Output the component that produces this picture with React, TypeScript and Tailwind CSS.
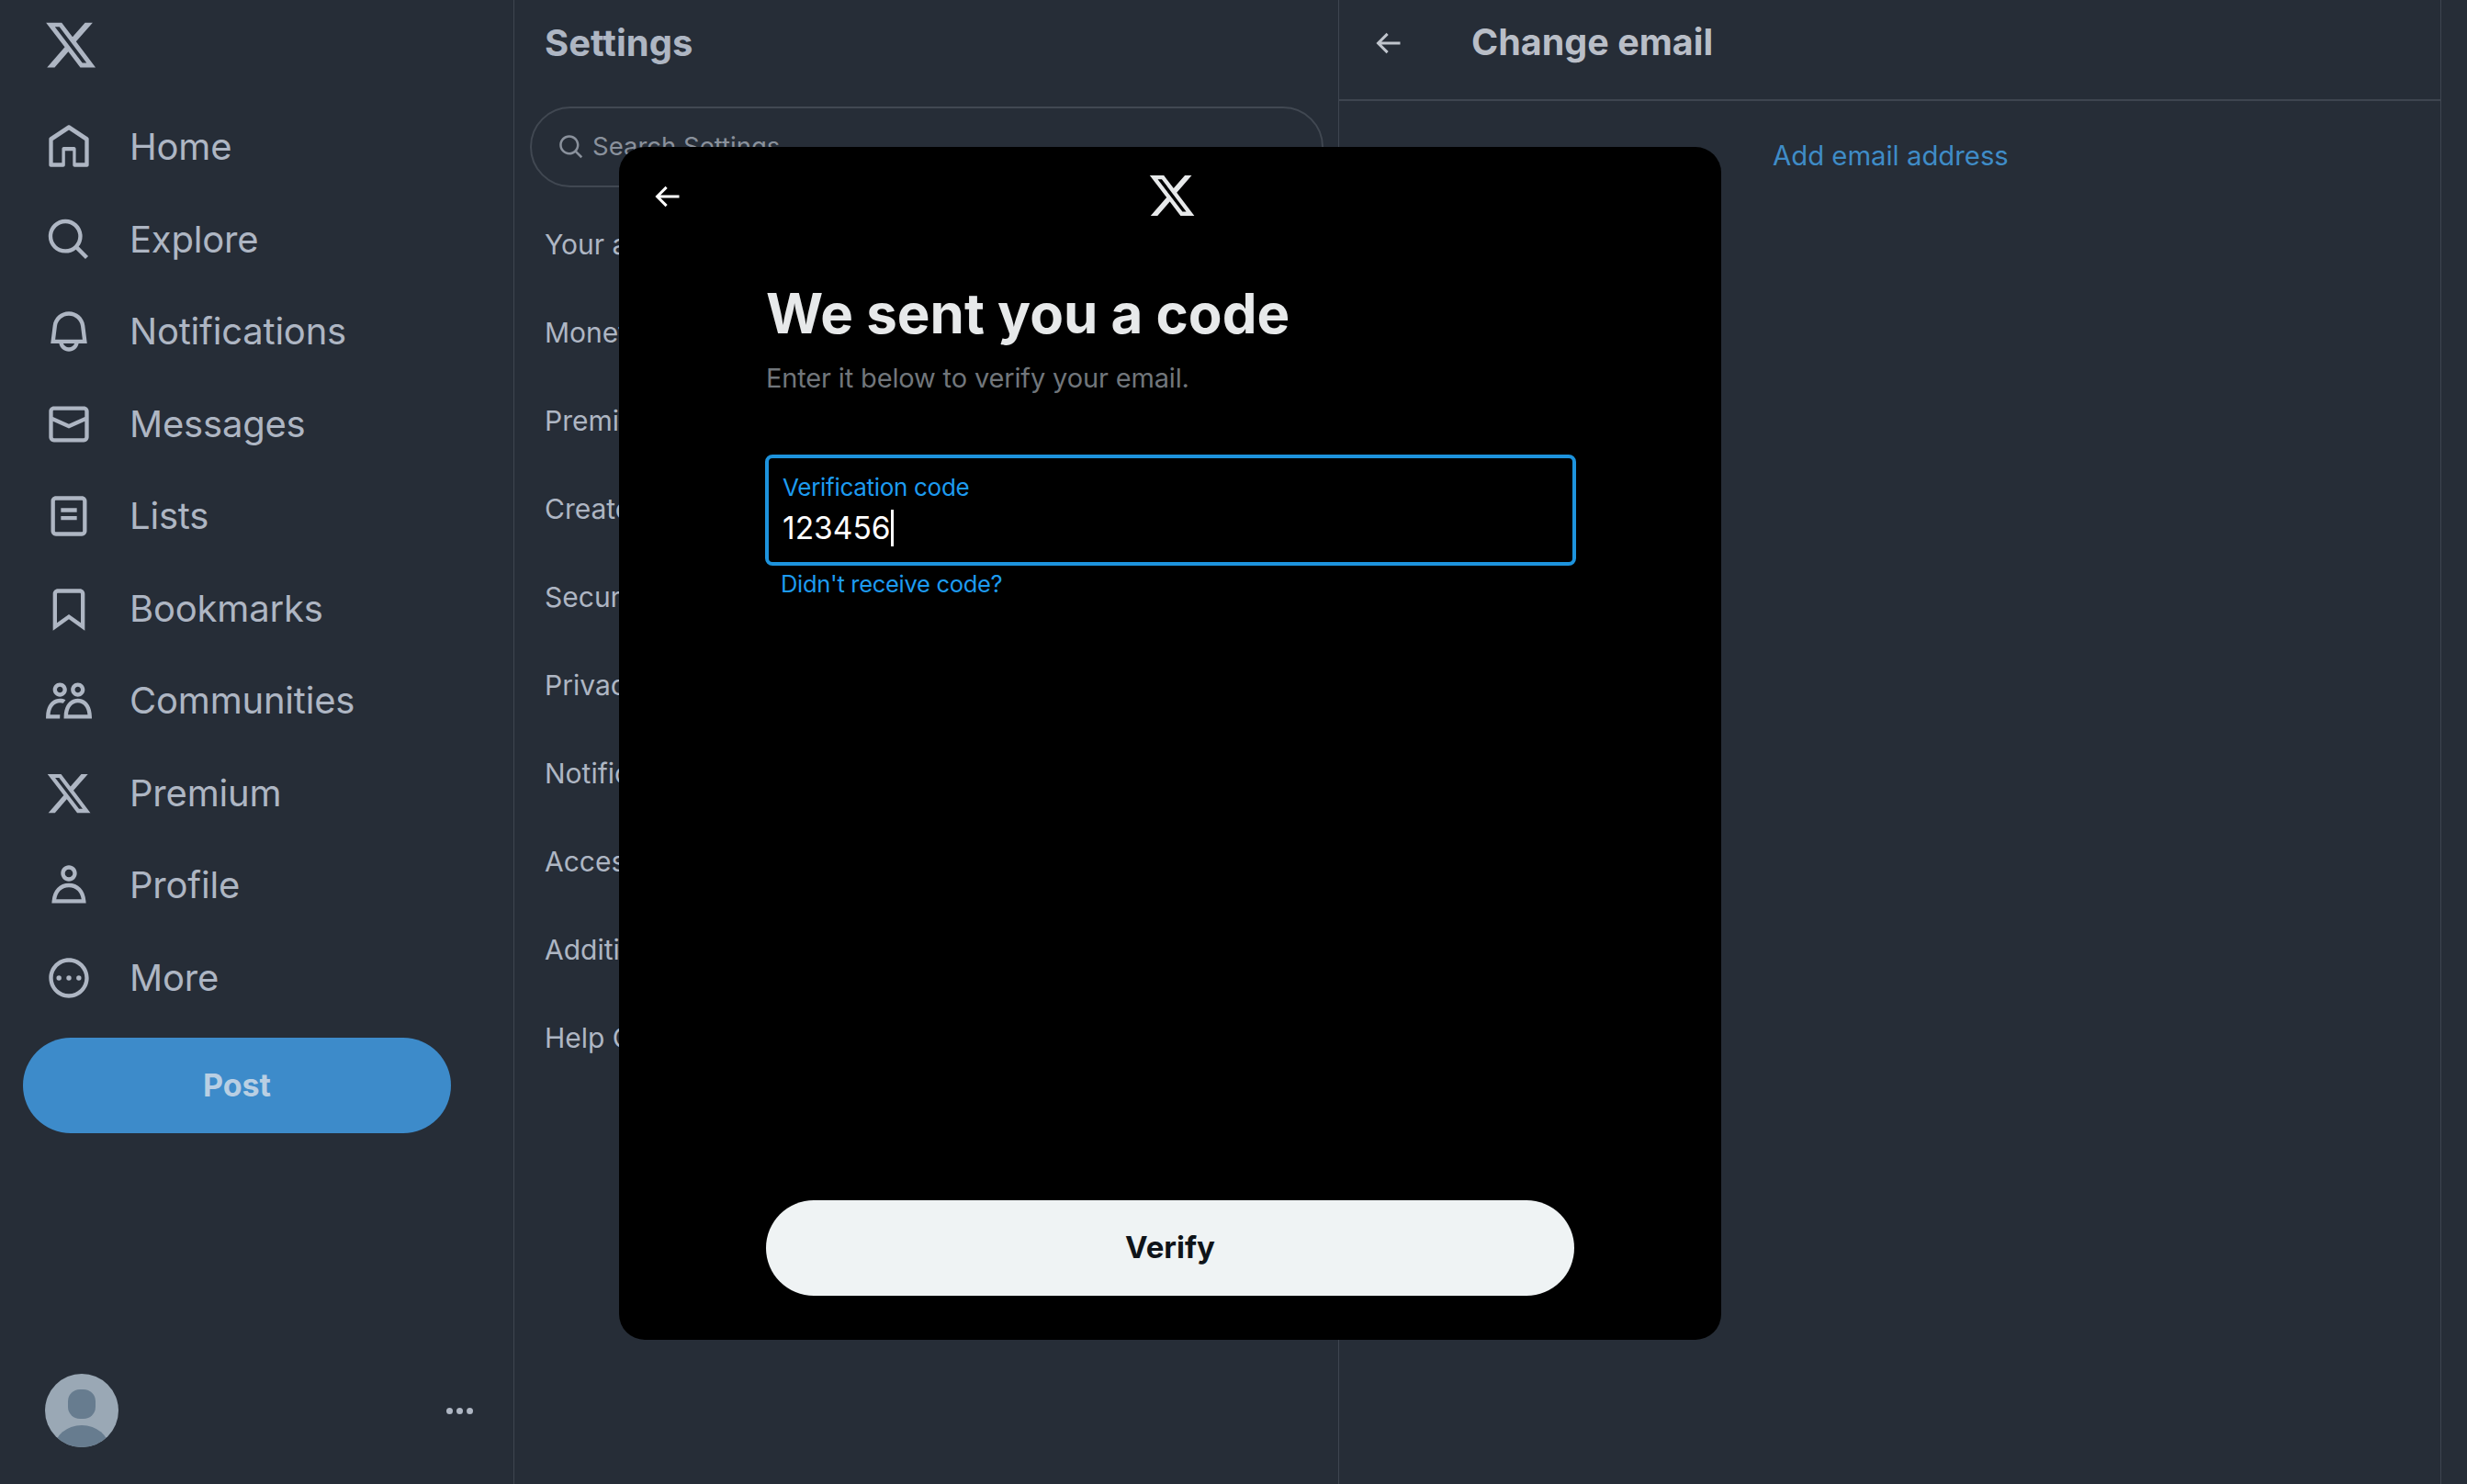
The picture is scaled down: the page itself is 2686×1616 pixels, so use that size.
const FONT = "font-['Inter','Noto_Sans',sans-serif]";

const X_PATH =
  "M18.244 2.25h3.308l-7.227 8.26 8.502 11.24H16.17l-5.214-6.817L4.99 21.75H1.68l7.73-8.835L1.254 2.25H8.08l4.713 6.231zm-1.161 17.52h1.833L7.084 4.126H5.117z";
const BACK_PATH = "M7.414 13l5.043 5.04-1.414 1.42L3.586 12l7.457-7.46 1.414 1.42L7.414 11H21v2H7.414z";

const navItems = [
  {
    label: "Home",
    d: "M21.591 7.146L12.52 1.157c-.316-.21-.724-.21-1.04 0l-9.071 5.99c-.26.173-.409.456-.409.757v13.183c0 .502.418.913.929.913H9.14c.51 0 .929-.41.929-.913v-7.075h3.909v7.075c0 .502.417.913.928.913h6.165c.511 0 .929-.41.929-.913V7.904c0-.301-.158-.584-.408-.758zM20 20l-4.5.01.011-7.097c0-.502-.418-.913-.928-.913H9.44c-.511 0-.929.41-.929.913L8.5 20H4V8.773l8.011-5.342L20 8.764z",
  },
  {
    label: "Explore",
    d: "M10.25 3.75c-3.59 0-6.5 2.91-6.5 6.5s2.91 6.5 6.5 6.5c1.795 0 3.419-.726 4.596-1.904 1.178-1.177 1.904-2.801 1.904-4.596 0-3.59-2.91-6.5-6.5-6.5zm-8.5 6.5c0-4.694 3.806-8.5 8.5-8.5s8.5 3.806 8.5 8.5c0 1.986-.682 3.815-1.824 5.262l4.781 4.781-1.414 1.414-4.781-4.781c-1.447 1.142-3.276 1.824-5.262 1.824-4.694 0-8.5-3.806-8.5-8.5z",
  },
  {
    label: "Notifications",
    d: "M19.993 9.042C19.48 5.017 16.054 2 11.996 2s-7.49 3.021-7.999 7.051L2.866 18H7.1c.463 2.282 2.481 4 4.9 4s4.437-1.718 4.9-4h4.236l-1.143-8.958zM12 20c-1.306 0-2.417-.835-2.829-2h5.658c-.412 1.165-1.523 2-2.829 2zm-6.866-4l.847-6.698C6.364 6.272 8.941 4 11.996 4s5.627 2.268 6.013 5.295L18.864 16H5.134z",
  },
  {
    label: "Messages",
    d: "M1.998 5.5c0-1.381 1.119-2.5 2.5-2.5h15c1.381 0 2.5 1.119 2.5 2.5v13c0 1.381-1.119 2.5-2.5 2.5h-15c-1.381 0-2.5-1.119-2.5-2.5v-13zm2.5-.5c-.276 0-.5.224-.5.5v2.764l8 3.638 8-3.636V5.5c0-.276-.224-.5-.5-.5h-15zm15.5 5.463l-8 3.636-8-3.638V18.5c0 .276.224.5.5.5h15c.276 0 .5-.224.5-.5v-8.037z",
  },
  {
    label: "Lists",
    d: "M3 4.5C3 3.12 4.12 2 5.5 2h13C19.88 2 21 3.12 21 4.5v15c0 1.38-1.12 2.5-2.5 2.5h-13C4.12 22 3 20.88 3 19.5v-15zM5.5 4c-.28 0-.5.22-.5.5v15c0 .28.22.5.5.5h13c.28 0 .5-.22.5-.5v-15c0-.28-.22-.5-.5-.5h-13zM16 10H8V8h8v2zm-8 2h8v2H8v-2z",
  },
  {
    label: "Bookmarks",
    d: "M4 4.5C4 3.12 5.119 2 6.5 2h11C18.881 2 20 3.12 20 4.5v18.44l-8-5.71-8 5.71V4.5zM6.5 4c-.276 0-.5.22-.5.5v14.56l6-4.29 6 4.29V4.5c0-.28-.224-.5-.5-.5h-11z",
  },
  {
    label: "Communities",
    d: "M7.501 19.917L7.471 21H.472l.029-1.027c.184-6.618 3.736-8.977 7-8.977.963 0 1.95.212 2.87.672-.444.478-.851 1.03-1.212 1.656-.507-.204-1.054-.329-1.658-.329-2.767 0-4.57 2.223-4.938 6.004H7.56c-.023.302-.05.599-.059.917zm15.998.056L23.528 21H9.472l.029-1.027c.184-6.618 3.736-8.977 7-8.977s6.816 2.358 7 8.977zM21.437 19c-.367-3.781-2.17-6.004-4.938-6.004s-4.57 2.223-4.938 6.004h9.875zm-4.938-9c-.799 0-1.527-.279-2.116-.73-.836-.64-1.384-1.638-1.384-2.77 0-1.93 1.567-3.5 3.5-3.5s3.5 1.57 3.5 3.5c0 1.132-.548 2.13-1.384 2.77-.589.451-1.317.73-2.116.73zm-1.5-3.5c0 .827.673 1.5 1.5 1.5s1.5-.673 1.5-1.5-.673-1.5-1.5-1.5-1.5.673-1.5 1.5zM7.5 3C9.433 3 11 4.57 11 6.5S9.433 10 7.5 10 4 8.43 4 6.5 5.567 3 7.5 3zm0 2C6.673 5 6 5.673 6 6.5S6.673 8 7.5 8 9 7.327 9 6.5 8.327 5 7.5 5z",
  },
  { label: "Premium", d: X_PATH },
  {
    label: "Profile",
    d: "M5.651 19h12.698c-.337-1.8-1.023-3.21-1.945-4.19C15.318 13.65 13.838 13 12 13s-3.317.65-4.404 1.81c-.922.98-1.608 2.39-1.945 4.19zm.486-5.56C7.627 11.85 9.648 11 12 11s4.373.85 5.863 2.44c1.477 1.58 2.366 3.8 2.632 6.46l.11 1.1H3.395l.11-1.1c.266-2.66 1.155-4.88 2.632-6.46zM12 4c-1.105 0-2 .9-2 2s.895 2 2 2 2-.9 2-2-.895-2-2-2zM8 6c0-2.21 1.791-4 4-4s4 1.79 4 4-1.791 4-4 4-4-1.79-4-4z",
  },
  {
    label: "More",
    d: "M2 12C2 6.48 6.48 2 12 2s10 4.48 10 10-4.48 10-10 10S2 17.52 2 12zm10-8c-4.42 0-8 3.58-8 8s3.58 8 8 8 8-3.58 8-8-3.58-8-8-8zM7 10.75a1.25 1.25 0 1 1 0 2.5 1.25 1.25 0 0 1 0-2.5zm5 0a1.25 1.25 0 1 1 0 2.5 1.25 1.25 0 0 1 0-2.5zm5 0a1.25 1.25 0 1 1 0 2.5 1.25 1.25 0 0 1 0-2.5z",
  },
];

const settingsItems = [
  "Your account",
  "Monetization",
  "Premium",
  "Creator Subscriptions",
  "Security and account access",
  "Privacy and safety",
  "Notifications",
  "Accessibility, display, and languages",
  "Additional resources",
  "Help Center",
];

function Icon({ d, className }: { d: string; className: string }) {
  return (
    <svg viewBox="0 0 24 24" fill="currentColor" className={className}>
      <path d={d} />
    </svg>
  );
}

function Sidebar() {
  return (
    <aside className="flex h-full w-[560px] shrink-0 flex-col border-r border-[#3e4550] text-[#aeb6c3]">
      <div className="flex h-[110px] shrink-0 items-start pl-[47px] pt-[19px]">
        <Icon d={X_PATH} className="h-[60px] w-[60px]" />
      </div>
      <nav className="flex flex-col">
        {navItems.map((item) => (
          <div key={item.label} className="flex h-[100.5px] items-center pl-[49px]">
            <Icon d={item.d} className="h-[52px] w-[52px] shrink-0" />
            <span className="ml-[40px] text-[40px] leading-none tracking-[-0.2px]">{item.label}</span>
          </div>
        ))}
      </nav>
      <button className="ml-[25px] mt-[15px] flex h-[104px] w-[466px] items-center justify-center rounded-full bg-[#3d8bca] pb-[2px] text-[34px] font-bold text-[#b9cfe3]">
        Post
      </button>
      <div className="mt-auto mb-[40px] flex items-center justify-between pl-[49px] pr-[44px]">
        <svg viewBox="0 0 80 80" className="h-[80px] w-[80px]">
          <defs>
            <clipPath id="avatar">
              <circle cx="40" cy="40" r="40" />
            </clipPath>
          </defs>
          <g clipPath="url(#avatar)">
            <rect width="80" height="80" fill="#9aa8b5" />
            <rect x="25" y="17" width="30" height="32" rx="13" fill="#677c8f" />
            <ellipse cx="40" cy="82" rx="30" ry="26" fill="#677c8f" />
          </g>
        </svg>
        <div className="flex gap-[4px]">
          <span className="h-[7px] w-[7px] rounded-full bg-[#aeb6c3]" />
          <span className="h-[7px] w-[7px] rounded-full bg-[#aeb6c3]" />
          <span className="h-[7px] w-[7px] rounded-full bg-[#aeb6c3]" />
        </div>
      </div>
    </aside>
  );
}

function SettingsColumn() {
  return (
    <section className="flex h-full w-[898px] shrink-0 flex-col border-r border-[#3e4550] text-[#aeb6c3]">
      <h2 className="flex h-[94px] shrink-0 items-center pl-[33px] text-[40px] font-bold">Settings</h2>
      <div className="ml-[17px] mt-[22px] flex h-[88px] w-[864px] items-center rounded-full border-2 border-[#414852] pl-[28px] text-[#8a919c]">
        <svg viewBox="0 0 24 24" fill="currentColor" className="h-[30px] w-[30px]">
          <path d="M10.25 3.75c-3.59 0-6.5 2.91-6.5 6.5s2.91 6.5 6.5 6.5c1.795 0 3.419-.726 4.596-1.904 1.178-1.177 1.904-2.801 1.904-4.596 0-3.59-2.91-6.5-6.5-6.5zm-8.5 6.5c0-4.694 3.806-8.5 8.5-8.5s8.5 3.806 8.5 8.5c0 1.986-.682 3.815-1.824 5.262l4.781 4.781-1.414 1.414-4.781-4.781c-1.447 1.142-3.276 1.824-5.262 1.824-4.694 0-8.5-3.806-8.5-8.5z" />
        </svg>
        <span className="ml-[8px] text-[27.5px]">Search Settings</span>
      </div>
      <ul className="mt-[14px] flex flex-col">
        {settingsItems.map((label) => (
          <li key={label} className="flex h-[96px] items-center pl-[33px] text-[30px]">
            {label}
          </li>
        ))}
      </ul>
    </section>
  );
}

function DetailColumn() {
  return (
    <section className="flex h-full w-[1200px] shrink-0 flex-col border-r border-[#3e4550] text-[#aeb6c3]">
      <header className="flex h-[110px] shrink-0 items-center border-b-2 border-[#3e4550] pb-[14px] pl-[35px]">
        <Icon d={BACK_PATH} className="h-[36px] w-[36px] text-[#c0c5cd]" />
        <h2 className="ml-[73px] text-[39.5px] font-bold text-[#b9bec7]">Change email</h2>
      </header>
      <a className="ml-[472px] mt-[40px] text-[29.3px] leading-[40px] text-[#3f8cc7]">Add email address</a>
    </section>
  );
}

function CodeModal() {
  return (
    <div className="absolute left-[674px] top-[160px] flex h-[1299px] w-[1200px] flex-col rounded-[28px] bg-black px-[160px] pb-[48px]">
      <div className="relative -mx-[160px] h-[104px] shrink-0">
        <Icon d={BACK_PATH} className="absolute left-[34px] top-[36px] h-[36px] w-[36px] text-white" />
        <Icon d={X_PATH} className="absolute left-[575px] top-[26px] h-[54px] w-[54px] text-[#e7e9ea]" />
      </div>
      <h1 className="mt-[39px] text-[60px] font-bold leading-[76px] text-[#e7e9ea]">We sent you a code</h1>
      <p className="mt-[13px] text-[29px] leading-[40px] tracking-[-0.15px] text-[#71767b]">Enter it below to verify your email.</p>
      <div className="-ml-[1px] mt-[63px] flex h-[121px] w-[883px] flex-col rounded-[8px] border-4 border-[#1d93dd] pl-[15px] pt-[15px]">
        <span className="text-[26px] leading-[34px] tracking-[-0.3px] text-[#1d9bf0]">Verification code</span>
        <span className="mt-[7px] flex h-[40px] items-center text-[33.5px] text-white">
          123456
          <span className="h-[40px] w-[3px] bg-white" />
        </span>
      </div>
      <a className="ml-[16px] mt-[3px] text-[25.5px] leading-[34px] tracking-[-0.3px] text-[#1d9bf0]">Didn't receive code?</a>
      <button className="mt-auto flex h-[104px] w-[880px] items-center justify-center rounded-full bg-[#eff3f4] text-[33px] font-bold text-[#0f1419]">
        Verify
      </button>
    </div>
  );
}

export default function App() {
  return (
    <div className={`relative flex h-[1616px] w-[2686px] overflow-hidden bg-[#262d37] ${FONT}`}>
      <Sidebar />
      <SettingsColumn />
      <DetailColumn />
      <CodeModal />
    </div>
  );
}
